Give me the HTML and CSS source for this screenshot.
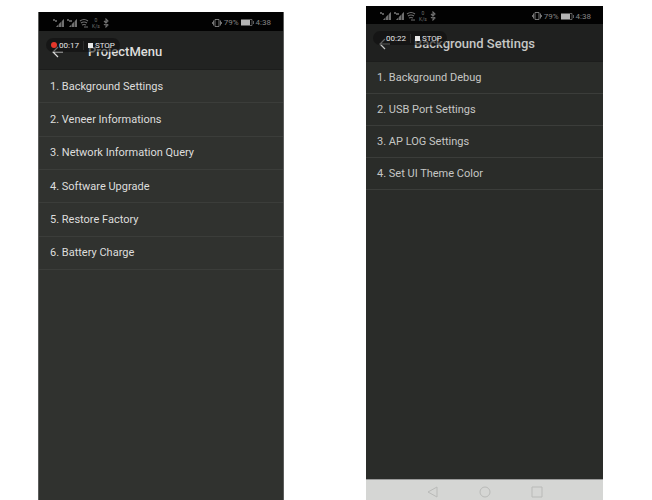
FILE: index.html
```html
<!DOCTYPE html>
<html lang="en">
<head>
<meta charset="utf-8">
<meta name="viewport" content="width=device-width, initial-scale=1">
<title>ProjectMenu</title>
<link rel="stylesheet" href="styles.css">
</head>
<body>
<svg class="defs" aria-hidden="true">
  <symbol id="signals" viewBox="0 0 36 14">
    <g fill="currentColor">
      <path d="M0 3h2v2H0zM2 4h2v2H2zM14 3h2v2h-2zM16 4h3v2h-3z" opacity=".8"/>
      <path d="M3 11l2-2v2zM6 11V8l2-2v5zM9 11V5l2-2v8zM16 11l2-2v2zM19 11V8l2-2v5zM22 11V5l2-2v8z"/>
      <path d="M3 11l8-8v8zM16 11l8-8v8z" opacity=".5"/>
    </g>
    <path d="M27 5q4-3 8 0M28 7q3-2 6 0M29 9q2-1 4 0M31 11h4" fill="none" stroke="currentColor" stroke-width="1.1"/>
  </symbol>
  <symbol id="bluetooth" viewBox="0 0 6 10">
    <path d="M1 3l4 4-2 2V1l2 2-4 4" fill="none" stroke="currentColor" stroke-width="1.1"/>
  </symbol>
  <symbol id="vibrate" viewBox="0 0 10 8">
    <path d="M3 .5h4v7H3zM1.5 1.5v5M8.5 1.5v5M.4 3v2M9.6 3v2" fill="none" stroke="currentColor" stroke-width=".9"/>
  </symbol>
  <symbol id="battery" viewBox="0 0 13 7">
    <path d="M0 .5h9v6H0z" fill="#b4b4b4"/>
    <path d="M9 .5h2v6H9M12.5 2v3" fill="none" stroke="currentColor" stroke-width=".7"/>
  </symbol>
  <symbol id="back" viewBox="0 0 12 12">
    <path d="M6 1L1 6l5 5M1 6h10" fill="none" stroke="currentColor" stroke-width="1.2"/>
  </symbol>
</svg>
<main class="screens">
  <section class="phone phone-menu">
    <div class="status">
      <div class="radio"><svg class="signals"><use href="#signals"/></svg><span class="rate"><span>0</span><span>K/s</span></span><svg class="bluetooth"><use href="#bluetooth"/></svg></div>
      <div class="power"><svg class="vibrate"><use href="#vibrate"/></svg><span>79%</span><svg class="battery"><use href="#battery"/></svg><span>4:38</span></div>
    </div>
    <header class="bar">
      <button class="back" aria-label="Back"><svg><use href="#back"/></svg></button>
      <h1>ProjectMenu</h1>
      <div class="recorder"><i class="dot"></i><span class="time">00:17</span><button class="stop"><i></i>STOP</button></div>
    </header>
    <ul class="list">
      <li><a href="#">1. Background Settings</a></li>
      <li><a href="#">2. Veneer Informations</a></li>
      <li><a href="#">3. Network Information Query</a></li>
      <li><a href="#">4. Software Upgrade</a></li>
      <li><a href="#">5. Restore Factory</a></li>
      <li><a href="#">6. Battery Charge</a></li>
    </ul>
  </section>
  <section class="phone phone-settings">
    <div class="status">
      <div class="radio"><svg class="signals"><use href="#signals"/></svg><span class="rate"><span>0</span><span>K/s</span></span><svg class="bluetooth"><use href="#bluetooth"/></svg></div>
      <div class="power"><svg class="vibrate"><use href="#vibrate"/></svg><span>79%</span><svg class="battery"><use href="#battery"/></svg><span>4:38</span></div>
    </div>
    <header class="bar">
      <button class="back" aria-label="Back"><svg><use href="#back"/></svg></button>
      <h1>Background Settings</h1>
      <div class="recorder"><i class="dot off"></i><span class="time">00:22</span><button class="stop"><i></i>STOP</button></div>
    </header>
    <ul class="list">
      <li><a href="#">1. Background Debug</a></li>
      <li><a href="#">2. USB Port Settings</a></li>
      <li><a href="#">3. AP LOG Settings</a></li>
      <li><a href="#">4. Set UI Theme Color</a></li>
    </ul>
    <nav class="nav">
      <button aria-label="Back"><svg viewBox="0 0 12 12"><path d="M10 1v10L1 6z"/></svg></button>
      <button aria-label="Home"><svg viewBox="0 0 12 12"><circle cx="6" cy="6" r="5"/></svg></button>
      <button aria-label="Recents"><svg viewBox="0 0 12 12"><path d="M1 1h10v10H1z"/></svg></button>
    </nav>
  </section>
</main>
</body>
</html>
```

FILE: styles.css
```css
* {
  box-sizing: border-box;
}

body {
  margin: 0;
  background: #fff;
  font-family: Roboto, "Liberation Sans", sans-serif;
}

button {
  margin: 0;
  padding: 0;
  border: 0;
  background: none;
  color: inherit;
  font: inherit;
}

.defs {
  position: absolute;
  width: 0;
  height: 0;
}

.screens {
  display: grid;
  grid-template-columns: 246fr 237fr;
  column-gap: 82px;
  min-height: 100vh;
  padding: 0 49px 0 38px;
}

.phone {
  display: flex;
  flex-direction: column;
}

.phone-menu {
  margin-top: 12px;
  background: #30322f;
  border-left: 1px solid #5c5d5c;
  border-right: 1px solid #5c5d5c;
  color: #dededd;
}

.phone-settings {
  margin-top: 6px;
  background: #2a2c29;
  color: #c6c7c5;
}

.status {
  display: flex;
  align-items: center;
  justify-content: space-between;
  height: 19px;
  padding: 2px 12px 0 14px;
  background: #020202;
  color: #858585;
}

.phone-settings .status {
  height: 18px;
}

.radio {
  display: flex;
  align-items: center;
  gap: 3px;
  color: #707070;
}

.signals {
  width: 36px;
  height: 14px;
}

.rate {
  display: grid;
  justify-items: center;
  font-size: 5px;
  line-height: 6px;
}

.bluetooth {
  width: 6px;
  height: 10px;
}

.power {
  display: flex;
  align-items: center;
  gap: 2px;
  font-size: 8px;
}

.vibrate {
  width: 10px;
  height: 8px;
}

.battery {
  width: 13px;
  height: 7px;
}

.bar {
  position: relative;
  display: flex;
  align-items: center;
  height: 39px;
  padding: 3px 0 0 13px;
  background: #222322;
  border-bottom: 1px solid #1c1d1c;
}

.phone-settings .bar {
  height: 38px;
  background: #1f201f;
}

.back {
  width: 12px;
  height: 12px;
  margin-right: 24px;
}

.phone-settings .back {
  margin-right: 23px;
}

.back svg {
  display: block;
  width: 12px;
  height: 12px;
}

h1 {
  margin: 0;
  font-size: 13px;
  font-weight: 500;
  line-height: 16px;
  white-space: nowrap;
}

.recorder {
  position: absolute;
  top: 7px;
  left: 7px;
  display: flex;
  align-items: center;
  height: 14px;
  padding: 0 5px;
  border-radius: 7px;
  background: rgba(12, 12, 12, 0.55);
  color: #e8e8e8;
  font-size: 8px;
}

.dot {
  width: 6px;
  height: 6px;
  margin-right: 2px;
  border-radius: 50%;
  background: #e5372b;
}

.dot.off {
  background: transparent;
}

.time {
  padding-right: 4px;
  border-right: 1px solid #2c2c2c;
}

.stop {
  display: flex;
  align-items: center;
  gap: 2px;
  margin-left: 4px;
}

.stop i {
  width: 5px;
  height: 5px;
  background: #e8e8e8;
}

.list {
  display: grid;
  grid-auto-rows: 32px;
  margin: 0;
  padding: 0;
  list-style: none;
  font-size: 11px;
}

.phone-menu .list {
  grid-template-rows: repeat(6, 1fr);
  height: 200px;
}

.list li {
  display: grid;
}

.list a {
  display: flex;
  align-items: center;
  padding-left: 11px;
  border-bottom: 1px solid #3b3d3a;
  color: inherit;
  text-decoration: none;
}

.nav {
  display: flex;
  align-items: center;
  justify-content: center;
  gap: 40px;
  height: 21px;
  margin-top: auto;
  padding-top: 4px;
  border-top: 1px solid #999a99;
  background: #d5d6d4;
}

.nav svg {
  display: block;
  width: 12px;
  height: 12px;
  fill: none;
  stroke: #b9bab8;
}
```
